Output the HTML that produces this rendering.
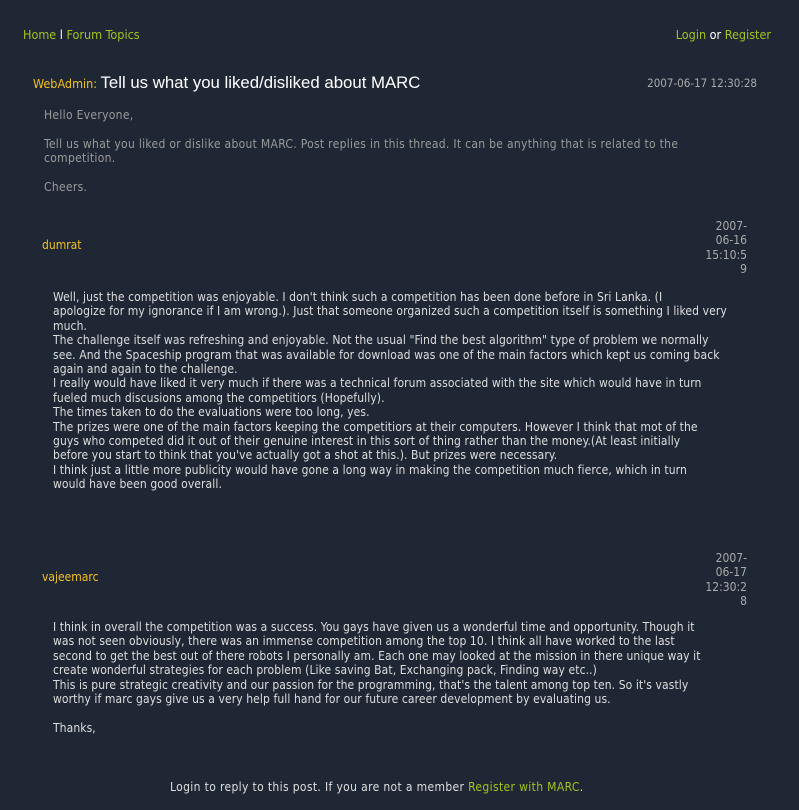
<!DOCTYPE html>
<html><head><meta charset="utf-8"><style>
body{margin:0;background:#1f2735;width:799px;height:810px;overflow:hidden;font-family:"DejaVu Sans Condensed","Liberation Sans",sans-serif;font-size:12px;color:#ddd;position:relative}
.a{position:absolute;white-space:nowrap}
.g{color:#a3c21e}
.y{color:#f0c020}
.p{line-height:14.4px;letter-spacing:0.09px}
</style></head><body>
<div class="a" style="left:23px;top:27px;font-size:12.5px"><span class="g">Home</span> <span style="color:#fff">l</span> <span class="g">Forum Topics</span></div>
<div class="a" style="right:28px;top:27px;font-size:12.5px"><span class="g">Login</span> <span style="color:#fff">or</span> <span class="g">Register</span></div>
<div class="a" style="left:33px;top:73px"><span class="y" style="font-size:12.5px">WebAdmin:</span> <span style="font-family:'Liberation Sans',sans-serif;font-size:16.8px;color:#fff">Tell us what you liked/disliked about MARC</span></div>
<div class="a" style="right:42px;top:76px;color:#aaa;font-size:11.5px">2007-06-17 12:30:28</div>
<div class="a p" style="left:44px;top:108px;color:#999;letter-spacing:0.3px">Hello Everyone,<br><br>Tell us what you liked or dislike about MARC. Post replies in this thread. It can be anything that is related to the<br>competition.<br><br>Cheers.</div>
<div class="a y" style="left:42px;top:238px">dumrat</div>
<div class="a p" style="right:52px;top:219px;text-align:right;color:#aaa;letter-spacing:0">2007-<br>06-16<br>15:10:5<br>9</div>
<div class="a p" style="left:53px;top:290px">Well, just the competition was enjoyable. I don't think such a competition has been done before in Sri Lanka. (I<br>apologize for my ignorance if I am wrong.). Just that someone organized such a competition itself is something I liked very<br>much.<br>The challenge itself was refreshing and enjoyable. Not the usual "Find the best algorithm" type of problem we normally<br>see. And the Spaceship program that was available for download was one of the main factors which kept us coming back<br>again and again to the challenge.<br>I really would have liked it very much if there was a technical forum associated with the site which would have in turn<br>fueled much discusions among the competitiors (Hopefully).<br>The times taken to do the evaluations were too long, yes.<br>The prizes were one of the main factors keeping the competitiors at their computers. However I think that mot of the<br>guys who competed did it out of their genuine interest in this sort of thing rather than the money.(At least initially<br>before you start to think that you've actually got a shot at this.). But prizes were necessary.<br>I think just a little more publicity would have gone a long way in making the competition much fierce, which in turn<br>would have been good overall.</div>
<div class="a y" style="left:42px;top:570px">vajeemarc</div>
<div class="a p" style="right:52px;top:551px;text-align:right;color:#aaa;letter-spacing:0">2007-<br>06-17<br>12:30:2<br>8</div>
<div class="a p" style="left:53px;top:620px">I think in overall the competition was a success. You gays have given us a wonderful time and opportunity. Though it<br>was not seen obviously, there was an immense competition among the top 10. I think all have worked to the last<br>second to get the best out of there robots I personally am. Each one may looked at the mission in there unique way it<br>create wonderful strategies for each problem (Like saving Bat, Exchanging pack, Finding way etc..)<br>This is pure strategic creativity and our passion for the programming, that's the talent among top ten. So it's vastly<br>worthy if marc gays give us a very help full hand for our future career development by evaluating us.<br><br>Thanks,</div>
<div class="a" style="left:170px;top:780px;font-size:12px;letter-spacing:0.35px">Login to reply to this post. If you are not a member <span class="g">Register with MARC</span>.</div>
</body></html>
